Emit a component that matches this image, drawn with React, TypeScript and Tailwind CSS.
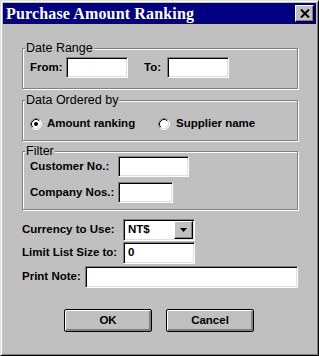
import React from "react";

const sunken =
  "bg-white border border-t-[#808080] border-l-[#808080] border-r-white border-b-white shadow-[inset_1px_1px_0_#000,inset_-1px_-1px_0_#dfdfdf]";
const etched =
  "relative border border-[#808080] shadow-[inset_1px_1px_0_#fff,1px_1px_0_#fff]";
const font = "font-['Liberation_Sans',Arial,sans-serif]";

function Legend({ children }: { children: React.ReactNode }) {
  return (
    <span className="absolute -top-[8px] left-[2px] px-[1px] bg-[#c0c0c0] text-[12.5px] leading-[14px] text-black">
      {children}
    </span>
  );
}

function Radio({ checked }: { checked?: boolean }) {
  return (
    <svg width="12" height="12" viewBox="0 0 12 12" className="shrink-0">
      <circle cx="6" cy="6" r="5" fill="#fff" />
      <path d="M2.11 9.89 A5.5 5.5 0 0 1 9.89 2.11" stroke="#808080" strokeWidth="1" fill="none" />
      <path d="M9.89 2.11 A5.5 5.5 0 0 1 2.11 9.89" stroke="#fff" strokeWidth="1" fill="none" />
      <path d="M2.82 9.18 A4.5 4.5 0 0 1 9.18 2.82" stroke="#000" strokeWidth="1" fill="none" />
      <path d="M9.18 2.82 A4.5 4.5 0 0 1 2.82 9.18" stroke="#dfdfdf" strokeWidth="1" fill="none" />
      {checked && <circle cx="6" cy="6" r="2" fill="#000" />}
    </svg>
  );
}

function Button({ children }: { children: React.ReactNode }) {
  return (
    <div className="w-[88px] h-[23px] flex items-center justify-center border border-black rounded-[2px] bg-[#c0c0c0] shadow-[inset_1px_1px_0_#fff,inset_-2px_-2px_0_#808080] text-[11.5px] font-bold">
      {children}
    </div>
  );
}

export default function App() {
  return (
    <div
      className={`w-[319px] h-[356px] bg-[#c0c0c0] border border-t-[#dfdfdf] border-l-[#dfdfdf] border-r-black border-b-black shadow-[inset_1px_1px_0_#fff,inset_-1px_-1px_0_#808080] p-[2px] text-black ${font}`}
    >
      {/* Title bar */}
      <div className="h-[21px] bg-[#000080] flex items-center justify-between pl-[3px] pr-[2px]">
        <span className="text-white font-bold text-[16px] leading-[21px] tracking-[0.15px] font-['Liberation_Serif','Times_New_Roman',serif]">
          Purchase Amount Ranking
        </span>
        <div className="w-[19px] h-[17px] bg-[#c0c0c0] border border-t-white border-l-white border-r-black border-b-black shadow-[inset_-1px_-1px_0_#808080] flex items-center justify-center">
          <svg width="10" height="9" viewBox="0 0 10 9">
            <path d="M1 0.5 L9 8.5 M9 0.5 L1 8.5" stroke="#000" strokeWidth="2" />
          </svg>
        </div>
      </div>

      {/* Body */}
      <div className="pl-[19px] pt-[24px] flex flex-col">
        {/* Date Range */}
        <div className={`${etched} w-[276px] h-[41px] pl-[7px] pt-[8px]`}>
          <Legend>Date Range</Legend>
          <div className="flex items-center h-[21px] text-[11.5px] font-bold">
            <span className="w-[36px]">From:</span>
            <div className={`${sunken} w-[62px] h-[21px]`} />
            <span className="ml-[16px] w-[23px]">To:</span>
            <div className={`${sunken} w-[62px] h-[21px]`} />
          </div>
        </div>

        {/* Data Ordered by */}
        <div className={`${etched} w-[276px] h-[41px] mt-[11px] pl-[7px] pt-[16px]`}>
          <Legend>Data Ordered by</Legend>
          <div className="flex items-center h-[14px] text-[11.5px] font-bold">
            <div className="w-[128px] flex items-center gap-[5px]">
              <Radio checked />
              <span>Amount ranking</span>
            </div>
            <div className="flex items-center gap-[6px]">
              <Radio />
              <span>Supplier name</span>
            </div>
          </div>
        </div>

        {/* Filter */}
        <div className={`${etched} w-[276px] h-[59px] mt-[10px] pl-[7px] pt-[4px] flex flex-col gap-[5px]`}>
          <Legend>Filter</Legend>
          <div className="flex items-center h-[21px] text-[11.5px] font-bold">
            <span className="w-[88px]">Customer No.:</span>
            <div className={`${sunken} w-[71px] h-[21px]`} />
          </div>
          <div className="flex items-center h-[21px] text-[11.5px] font-bold">
            <span className="w-[88px]">Company Nos.:</span>
            <div className={`${sunken} w-[55px] h-[21px]`} />
          </div>
        </div>

        {/* Currency */}
        <div className="flex items-center h-[22px] mt-[9px] text-[11.5px] font-bold">
          <span className="w-[101px]">Currency to Use:</span>
          <div className={`${sunken} w-[72px] h-[22px] p-[1px] flex items-stretch justify-between`}>
            <span className="pl-[3px] flex items-center">NT$</span>
            <div className="w-[19px] bg-[#c0c0c0] border border-t-white border-l-white border-r-black border-b-black shadow-[inset_-1px_-1px_0_#808080] flex items-center justify-center">
              <svg width="7" height="5" viewBox="0 0 7 5">
                <path d="M0 0 H7 L3.5 4 Z" fill="#000" />
              </svg>
            </div>
          </div>
        </div>

        {/* Limit */}
        <div className="flex items-center h-[22px] mt-[1px] text-[11.5px] font-bold">
          <span className="w-[101px]">Limit List Size to:</span>
          <div className={`${sunken} w-[72px] h-[22px] flex items-center pl-[4px]`}>0</div>
        </div>

        {/* Print note */}
        <div className="flex items-center h-[22px] mt-[2px] text-[11.5px] font-bold">
          <span className="w-[63px]">Print Note:</span>
          <div className={`${sunken} w-[213px] h-[22px]`} />
        </div>

        {/* Buttons */}
        <div className="flex mt-[21px] pl-[42px] gap-[14px]">
          <Button>OK</Button>
          <Button>Cancel</Button>
        </div>
      </div>
    </div>
  );
}
